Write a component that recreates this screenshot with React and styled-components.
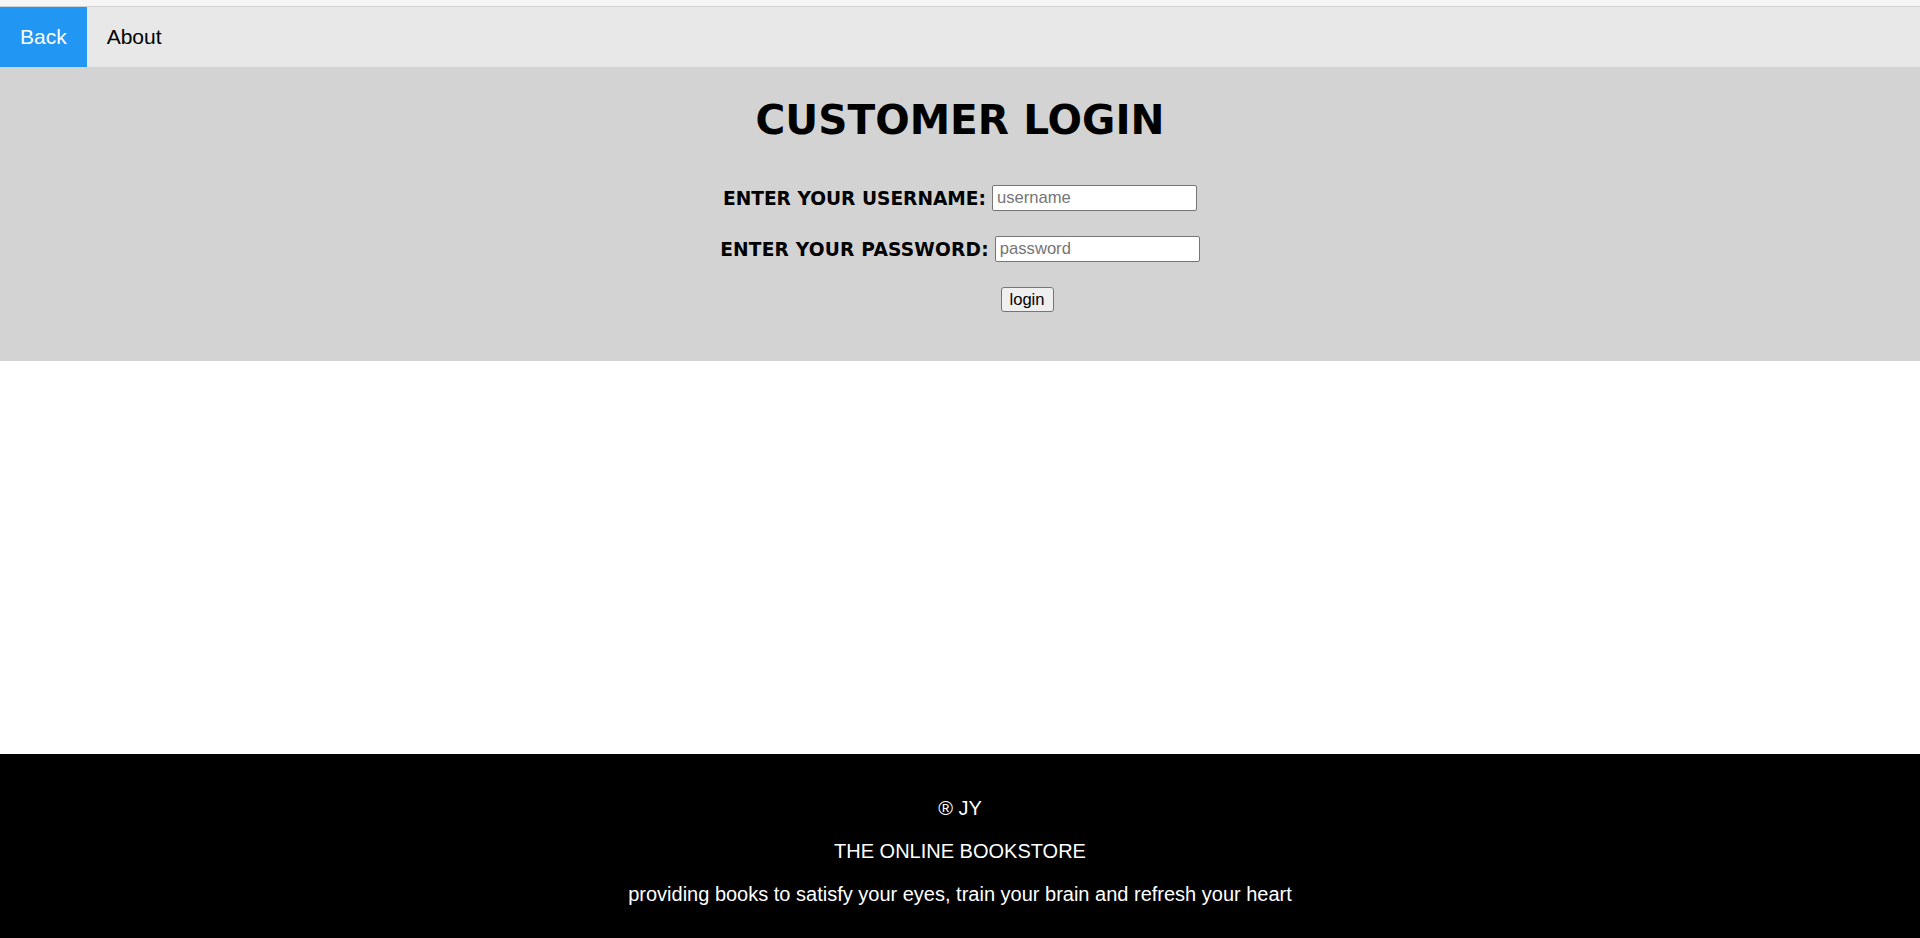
import React from "react";
import styled, { createGlobalStyle } from "styled-components";

const GlobalStyle = createGlobalStyle`
  html, body {
    margin: 0;
    padding: 0;
    background: #ffffff;
  }
  body {
    font-family: "Liberation Sans", Arial, sans-serif;
  }
  #root {
    min-height: 100vh;
  }
`;

const Page = styled.div`
  display: flex;
  flex-direction: column;
  min-height: 100vh;
`;

const ChromeStrip = styled.div`
  height: 6px;
  background: #f5f5f5;
  border-bottom: 1px solid #d0d0d0;
`;

const NavBar = styled.nav`
  display: flex;
  align-items: stretch;
  height: 60px;
  background: #e8e8e8;
`;

const NavItem = styled.a`
  display: flex;
  align-items: center;
  padding: 0 20px;
  font-family: "Liberation Sans", Arial, sans-serif;
  font-size: 21px;
  color: ${(p) => (p.$active ? "#ffffff" : "#000000")};
  background: ${(p) => (p.$active ? "#2196f3" : "transparent")};
  text-decoration: none;
  cursor: pointer;
`;

const LoginSection = styled.section`
  background: #d3d3d3;
  padding: 29px 0 49px;
  display: flex;
  flex-direction: column;
  align-items: center;
`;

const Title = styled.h1`
  margin: 0 0 41px;
  font-family: "DejaVu Sans", Verdana, sans-serif;
  font-weight: bold;
  font-size: 40.6px;
  line-height: 48px;
  color: #000;
`;

const FieldRow = styled.div`
  display: flex;
  align-items: center;
  justify-content: center;
  gap: 6px;
  margin-bottom: ${(p) => p.$gap || 0}px;
`;

const Label = styled.label`
  font-family: "DejaVu Sans", Verdana, sans-serif;
  font-weight: bold;
  font-size: 18.6px;
  letter-spacing: ${(p) => (p.$wide ? "0.2px" : "0")};
  color: #000;
`;

const TextInput = styled.input`
  box-sizing: border-box;
  width: 205px;
  height: 26px;
  padding: 1px 4px;
  border: 1px solid #767676;
  border-radius: 2px;
  background: #ffffff;
  font-family: "Liberation Sans", Arial, sans-serif;
  font-size: 16.6px;
  color: #000;
  outline: none;
  &::placeholder {
    color: #757575;
  }
`;

const ButtonRow = styled.div`
  display: flex;
  justify-content: center;
  padding-left: 134px;
`;

const LoginButton = styled.button`
  box-sizing: border-box;
  width: 53px;
  height: 25px;
  padding: 0;
  border: 1px solid #767676;
  border-radius: 3px;
  background: #efefef;
  font-family: "Liberation Sans", Arial, sans-serif;
  font-size: 16.6px;
  color: #000;
`;

const Main = styled.main`
  flex: 1;
  background: #ffffff;
`;

const Footer = styled.footer`
  background: #000000;
  color: #ffffff;
  padding: 43px 0 32px;
  display: flex;
  flex-direction: column;
  align-items: center;
  gap: 20px;
`;

const FooterLine = styled.p`
  margin: 0;
  font-family: "Liberation Sans", Arial, sans-serif;
  font-size: 20px;
  line-height: 23px;
  text-align: center;
`;

export default function App() {
  return (
    <>
      <GlobalStyle />
      <Page>
        <ChromeStrip />
        <NavBar>
          <NavItem $active>Back</NavItem>
          <NavItem>About</NavItem>
        </NavBar>
        <LoginSection>
          <Title>CUSTOMER LOGIN</Title>
          <FieldRow $gap={25}>
            <Label htmlFor="username">ENTER YOUR USERNAME:</Label>
            <TextInput id="username" type="text" placeholder="username" />
          </FieldRow>
          <FieldRow $gap={25}>
            <Label htmlFor="password" $wide>ENTER YOUR PASSWORD:</Label>
            <TextInput id="password" type="password" placeholder="password" />
          </FieldRow>
          <ButtonRow>
            <LoginButton type="submit">login</LoginButton>
          </ButtonRow>
        </LoginSection>
        <Main />
        <Footer>
          <FooterLine>® JY</FooterLine>
          <FooterLine>THE ONLINE BOOKSTORE</FooterLine>
          <FooterLine>
            providing books to satisfy your eyes, train your brain and refresh your heart
          </FooterLine>
        </Footer>
      </Page>
    </>
  );
}
